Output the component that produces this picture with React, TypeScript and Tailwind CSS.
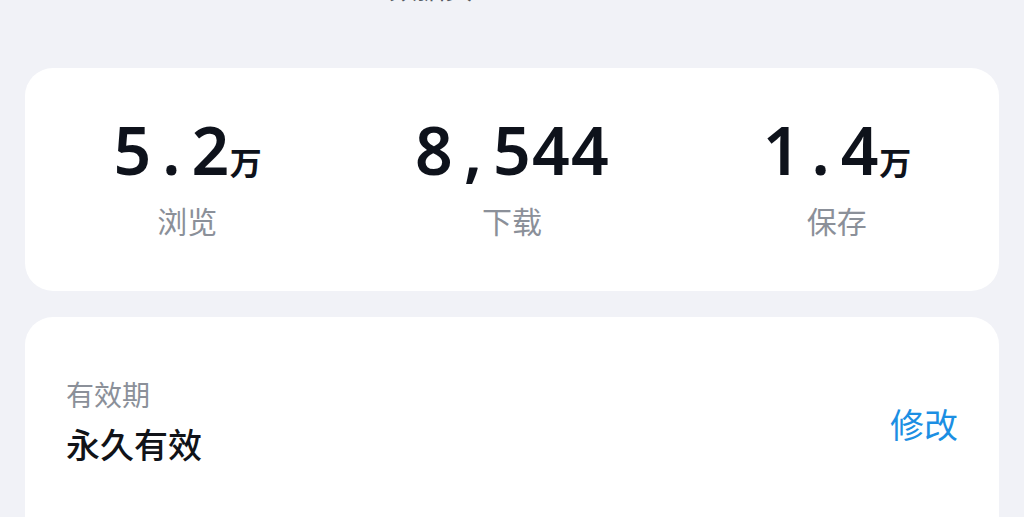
const stats = [
  { value: "5.2", unit: "万", label: "浏览" },
  { value: "8,544", unit: "", label: "下载" },
  { value: "1.4", unit: "万", label: "保存" },
];

function StatNumber({ value, unit }: { value: string; unit: string }) {
  return (
    <div className="flex items-baseline justify-center text-[66px] leading-none font-semibold text-[#0e121b]">
      {value.split("").map((ch, i) => (
        <span key={i} className="inline-block w-[39px] text-center">
          {ch}
        </span>
      ))}
      {unit && <span className="text-[32px] font-bold">{unit}</span>}
    </div>
  );
}

export default function App() {
  return (
    <div
      className="min-h-screen w-full overflow-hidden bg-[#f1f2f7] px-[25px]"
      style={{ fontFamily: '"Noto Sans", "Noto Sans CJK SC", sans-serif' }}
    >
      {/* title, mostly scrolled off the top */}
      <div className="-mt-[28px] pl-[364px] text-[28px] leading-[32px] text-[#555a63]">
        数据页
      </div>

      {/* stats card */}
      <div className="mt-[64px] grid h-[223px] grid-cols-3 rounded-[28px] bg-white pt-[48px]">
        {stats.map((s) => (
          <div key={s.label} className="flex flex-col items-center">
            <StatNumber value={s.value} unit={s.unit} />
            <div className="mt-[22px] text-[30px] leading-[36px] text-[#8b9099]">
              {s.label}
            </div>
          </div>
        ))}
      </div>

      {/* validity card */}
      <div className="mt-[26px] flex h-[260px] items-start justify-between rounded-[28px] bg-white px-[41px] pt-[61px]">
        <div className="flex flex-col">
          <div className="text-[28px] leading-[34px] text-[#8b9099]">有效期</div>
          <div className="mt-[13px] text-[34px] leading-[40px] font-medium text-[#111318]">
            永久有效
          </div>
        </div>
        <button className="mt-[27px] text-[34px] leading-[40px] text-[#1c8fe3]">
          修改
        </button>
      </div>
    </div>
  );
}
